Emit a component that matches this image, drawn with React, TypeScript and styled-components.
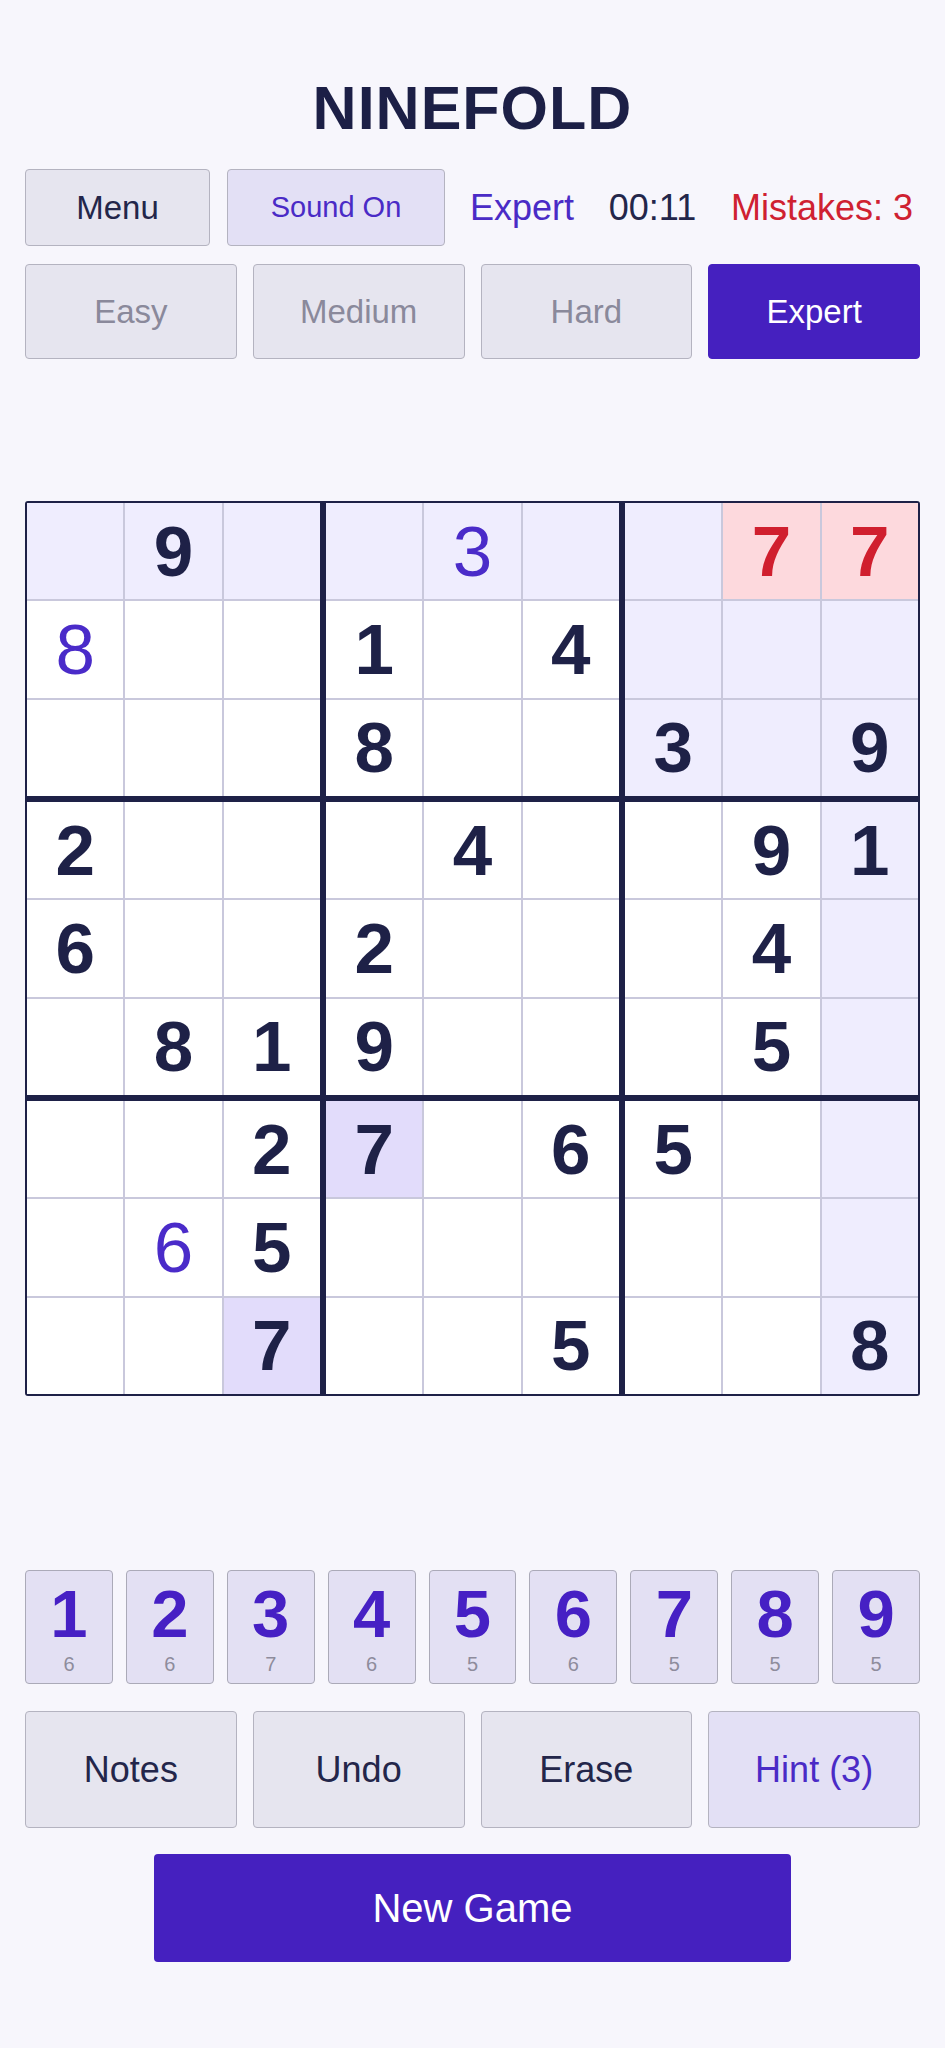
import React from 'react';
import styled, { createGlobalStyle } from 'styled-components';

const GlobalStyle = createGlobalStyle`
  body {
    margin: 0;
    background: #f7f6fc;
    font-family: 'Liberation Sans', Arial, Helvetica, sans-serif;
  }
`;

const puzzle = [
  '.9..3..77',
  '8..1.4...',
  '...8..3.9',
  '2...4..91',
  '6..2...4.',
  '.819...5.',
  '..27.65..',
  '.65......',
  '..7..5..8',
];

const userCells = ['0-4', '1-0', '7-1'];
const errorCells = ['0-7', '0-8'];
const selected = { row: 0, col: 8 };
const counts = [6, 6, 7, 6, 5, 6, 5, 5, 5];
const levels = ['Easy', 'Medium', 'Hard', 'Expert'];

type Tone = 'plain' | 'hl' | 'same' | 'err';
type Ink = 'given' | 'user' | 'err';

const App: React.FC = () => {
  const selValue = puzzle[selected.row][selected.col];

  const cellTone = (r: number, c: number): Tone => {
    const key = `${r}-${c}`;
    if (errorCells.includes(key)) return 'err';
    const sameBox =
      Math.floor(r / 3) === Math.floor(selected.row / 3) &&
      Math.floor(c / 3) === Math.floor(selected.col / 3);
    if (r === selected.row || c === selected.col || sameBox) return 'hl';
    if (puzzle[r][c] === selValue) return 'same';
    return 'plain';
  };

  const cellInk = (r: number, c: number): Ink => {
    const key = `${r}-${c}`;
    if (errorCells.includes(key)) return 'err';
    if (userCells.includes(key)) return 'user';
    return 'given';
  };

  return (
    <>
      <GlobalStyle />
      <Page>
        <Title>NINEFOLD</Title>
        <TopRow>
          <Button $width={185}>Menu</Button>
          <Button $width={218} $accent $small>
            Sound On
          </Button>
          <Info>
            <InfoText $color="#4a2bc6">Expert</InfoText>
            <InfoText $color="#23264a">00:11</InfoText>
            <InfoText $color="#cf2131">Mistakes: 3</InfoText>
          </Info>
        </TopRow>
        <LevelRow>
          {levels.map((l) => (
            <LevelButton key={l} $active={l === 'Expert'}>
              {l}
            </LevelButton>
          ))}
        </LevelRow>
        <Board>
          {[0, 1, 2].map((br) =>
            [0, 1, 2].map((bc) => (
              <Box key={`${br}-${bc}`}>
                {[0, 1, 2].map((ir) =>
                  [0, 1, 2].map((ic) => {
                    const r = br * 3 + ir;
                    const c = bc * 3 + ic;
                    const v = puzzle[r][c];
                    return (
                      <Cell key={`${r}-${c}`} $tone={cellTone(r, c)} $ink={cellInk(r, c)}>
                        {v === '.' ? '' : v}
                      </Cell>
                    );
                  })
                )}
              </Box>
            ))
          )}
        </Board>
        <NumPad>
          {counts.map((n, i) => (
            <NumKey key={i}>
              <NumDigit>{i + 1}</NumDigit>
              <NumCount>{n}</NumCount>
            </NumKey>
          ))}
        </NumPad>
        <ActionRow>
          <ActionButton>Notes</ActionButton>
          <ActionButton>Undo</ActionButton>
          <ActionButton>Erase</ActionButton>
          <ActionButton $accent>Hint (3)</ActionButton>
        </ActionRow>
        <NewGame>New Game</NewGame>
      </Page>
    </>
  );
};

const Page = styled.div`
  display: flex;
  flex-direction: column;
  padding: 76px 25px 60px;
`;

const Title = styled.h1`
  margin: 0;
  text-align: center;
  font-size: 61px;
  line-height: 65px;
  font-weight: 700;
  letter-spacing: 1px;
  color: #1c1f46;
`;

const TopRow = styled.div`
  display: flex;
  align-items: center;
  gap: 17px;
  margin-top: 28px;
  height: 77px;
`;

const Button = styled.button<{ $width: number; $accent?: boolean; $small?: boolean }>`
  width: ${(p) => p.$width}px;
  height: 77px;
  border: 1px solid #b4b3c0;
  border-radius: 4px;
  background: ${(p) => (p.$accent ? '#e3e0f5' : '#e6e5ef')};
  color: ${(p) => (p.$accent ? '#4a2bc6' : '#23264a')};
  font-family: inherit;
  font-size: ${(p) => (p.$small ? '29px' : '33px')};
  padding: 0;
`;

const Info = styled.div`
  flex: 1;
  display: flex;
  justify-content: space-between;
  align-items: center;
  padding: 0 7px 0 8px;
`;

const InfoText = styled.span<{ $color: string }>`
  font-size: 36px;
  color: ${(p) => p.$color};
`;

const LevelRow = styled.div`
  display: grid;
  grid-template-columns: repeat(4, 1fr);
  gap: 16px;
  margin-top: 18px;
`;

const LevelButton = styled.button<{ $active?: boolean }>`
  height: 95px;
  border: 1px solid ${(p) => (p.$active ? '#4520bf' : '#b4b3c0')};
  border-radius: 4px;
  background: ${(p) => (p.$active ? '#4520bf' : '#e6e5ef')};
  color: ${(p) => (p.$active ? '#ffffff' : '#8a899b')};
  font-family: inherit;
  font-size: 33px;
`;

const Board = styled.div`
  margin-top: 142px;
  width: 100%;
  aspect-ratio: 1;
  box-sizing: border-box;
  display: grid;
  grid-template-columns: repeat(3, 1fr);
  grid-template-rows: repeat(3, 1fr);
  gap: 6px;
  background: #1e2147;
  border: 2px solid #1e2147;
  border-radius: 3px;
`;

const Box = styled.div`
  display: grid;
  grid-template-columns: repeat(3, 1fr);
  grid-template-rows: repeat(3, 1fr);
  gap: 2px;
  background: #c9c8dc;
`;

const toneBg: Record<Tone, string> = {
  plain: '#ffffff',
  hl: '#efedfe',
  same: '#e2dcfb',
  err: '#fdd9dd',
};

const inkColor: Record<Ink, string> = {
  given: '#1e2147',
  user: '#4a2bc9',
  err: '#d01f2e',
};

const Cell = styled.div<{ $tone: Tone; $ink: Ink }>`
  display: flex;
  align-items: center;
  justify-content: center;
  background: ${(p) => toneBg[p.$tone]};
  color: ${(p) => inkColor[p.$ink]};
  font-size: 71px;
  line-height: 1;
  font-weight: ${(p) => (p.$ink === 'user' ? 400 : 700)};
`;

const NumPad = styled.div`
  display: grid;
  grid-template-columns: repeat(9, 1fr);
  gap: 13px;
  margin-top: 174px;
`;

const NumKey = styled.button`
  height: 114px;
  display: flex;
  flex-direction: column;
  align-items: center;
  justify-content: center;
  gap: 7px;
  padding: 0;
  border: 1px solid #abaab8;
  border-radius: 4px;
  background: #e3e0f3;
  font-family: inherit;
`;

const NumDigit = styled.span`
  font-size: 67px;
  line-height: 1;
  font-weight: 700;
  color: #4620c4;
`;

const NumCount = styled.span`
  font-size: 20px;
  line-height: 1;
  color: #8e8c9c;
`;

const ActionRow = styled.div`
  display: grid;
  grid-template-columns: repeat(4, 1fr);
  gap: 16px;
  margin-top: 27px;
`;

const ActionButton = styled.button<{ $accent?: boolean }>`
  height: 117px;
  border: 1px solid #b4b3c0;
  border-radius: 4px;
  background: ${(p) => (p.$accent ? '#e3e0f5' : '#e6e5ef')};
  color: ${(p) => (p.$accent ? '#4a2bc6' : '#23264a')};
  font-family: inherit;
  font-size: 36px;
`;

const NewGame = styled.button`
  align-self: center;
  width: 637px;
  height: 108px;
  margin-top: 26px;
  border: none;
  border-radius: 4px;
  background: #4520bf;
  color: #ffffff;
  font-family: inherit;
  font-size: 40px;
`;

export default App;
